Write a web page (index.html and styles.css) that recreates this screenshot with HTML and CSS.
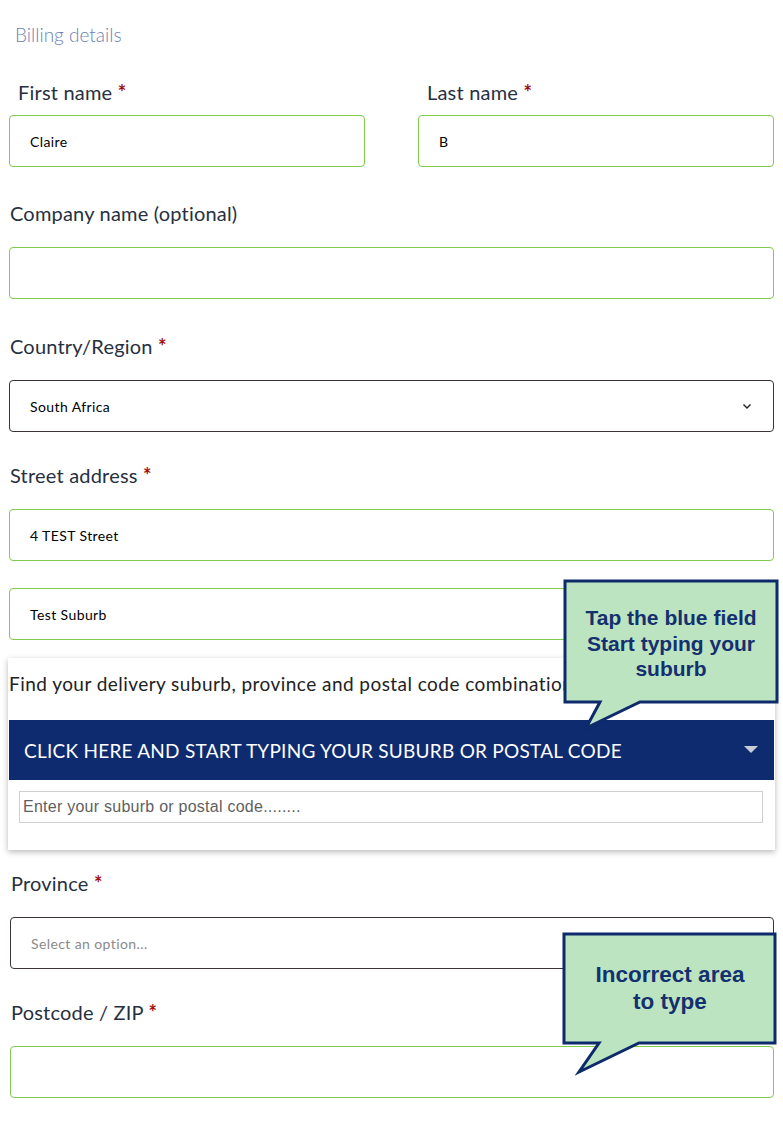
FILE: index.html
```html
<!DOCTYPE html>
<html lang="en">
<head>
<meta charset="utf-8">
<title>Billing details</title>
<link rel="stylesheet" href="styles.css">
</head>
<body>
<div class="page">
  <h3 class="title">Billing details</h3>

  <div class="row-two">
    <div class="field first">
      <label class="lbl lbl-first">First name <span class="req">*</span></label>
      <div class="input green">Claire</div>
    </div>
    <div class="field first">
      <label class="lbl lbl-first">Last name <span class="req">*</span></label>
      <div class="input green">B</div>
    </div>
  </div>

  <div class="field f-company">
    <label class="lbl">Company name (optional)</label>
    <div class="input green"></div>
  </div>

  <div class="field f-country">
    <label class="lbl">Country/Region <span class="req">*</span></label>
    <div class="input dark select">
      <span>South Africa</span>
      <svg class="chev" width="10" height="7" viewBox="0 0 10 7"><path d="M1.5 1.5 L5 5 L8.5 1.5" fill="none" stroke="#222" stroke-width="1.4"/></svg>
    </div>
  </div>

  <div class="field f-street">
    <label class="lbl">Street address <span class="req">*</span></label>
    <div class="input green">4 TEST Street</div>
    <div class="input green second">Test Suburb</div>
  </div>

  <div class="card">
    <p class="card-text">Find your delivery suburb, province and postal code combination</p>
    <div class="bluebar">
      <span>CLICK HERE AND START TYPING YOUR SUBURB OR POSTAL CODE</span>
      <svg class="tri" width="14" height="8" viewBox="0 0 14 8"><path d="M0 0 L14 0 L7 7 Z" fill="#c9cbd6"/></svg>
    </div>
    <div class="search">Enter your suburb or postal code........</div>
  </div>

  <div class="field f-province">
    <label class="lbl">Province <span class="req">*</span></label>
    <div class="input dark placeholder">Select an option...</div>
  </div>

  <div class="field f-postcode">
    <label class="lbl">Postcode / ZIP <span class="req">*</span></label>
    <div class="input green"></div>
  </div>
</div>

<div class="callout callout-1">
  <svg class="bubble" width="216" height="152" viewBox="0 0 216 152">
    <polygon points="2,2 214,2 214,123 77,123 23,149 37,123 2,123" fill="#bde4c1" stroke="#0d2a6b" stroke-width="3"/>
  </svg>
  <div class="callout-text t1">Tap the blue field<br>Start typing your<br>suburb</div>
</div>

<div class="callout callout-2">
  <svg class="bubble" width="216" height="144" viewBox="0 0 216 144">
    <polygon points="2,2 213,2 213,111 77,111 17,140 37,111 2,111" fill="#bde4c1" stroke="#0d2a6b" stroke-width="3"/>
  </svg>
  <div class="callout-text t2">Incorrect area<br>to type</div>
</div>
</body>
</html>
```

FILE: styles.css
```css
* { box-sizing: border-box; }
html, body { margin: 0; padding: 0; background: #fff; }
body { font-family: "Lato", "Noto Sans", sans-serif; color: #1f2937; }

.page {
  width: 783px;
  padding: 0 9px 0 9px;
}

.title {
  margin: 0;
  padding: 23px 0 0 6px;
  font-size: 19px;
  line-height: 24px;
  font-weight: 300;
  color: #6d7fb5;
}

.row-two {
  display: grid;
  grid-template-columns: 356px 356px;
  column-gap: 53px;
  margin-top: 33px;
}

.lbl {
  display: block;
  font-size: 20px;
  line-height: 24px;
  letter-spacing: 0.2px;
  color: #27303f;
  margin-bottom: 22px;
  padding-left: 1px;
}
.lbl-first { margin-bottom: 11px; padding-left: 9px; }
.req { color: #a10d0d; font-weight: 700; }

.input {
  height: 52px;
  border: 1px solid #80cc4c;
  border-radius: 4px;
  display: flex;
  align-items: center;
  padding-left: 20px;
  font-size: 14px;
  letter-spacing: 0.4px;
  color: #000;
}
.input.dark { border-color: #3c3434; }
.input.select { justify-content: space-between; padding-right: 21px; }
.input.placeholder { color: #8a8a8a; }
.input.second { margin-top: 27px; }

.f-company { margin-top: 34px; }
.f-country { margin-top: 35px; }
.f-street { margin-top: 31px; }

.card {
  margin: 18px -1px 0 -1px;
  width: 767px;
  height: 192px;
  background: #fff;
  box-shadow: 0 2px 6px rgba(0,0,0,0.28);
  padding: 14px 1px 0 1px;
}
.card-text {
  margin: 0;
  font-size: 19px;
  line-height: 24px;
  letter-spacing: 0.45px;
  color: #222;
  white-space: nowrap;
  overflow: hidden;
}
.bluebar {
  margin-top: 24px;
  height: 60px;
  background: #0e2b6f;
  display: flex;
  align-items: center;
  justify-content: space-between;
  padding: 0 16px 0 15px;
  color: #fff;
  font-size: 19px;
  letter-spacing: 0.25px;
}
.search {
  margin: 11px 11px 0 10px;
  height: 32px;
  border: 1px solid #cfcfcf;
  display: flex;
  align-items: center;
  padding-left: 3px;
  font-family: "Liberation Sans", Arial, sans-serif;
  font-size: 16px;
  letter-spacing: 0.25px;
  color: #5f5f5f;
}

.f-province { margin-top: 21px; }
.f-province .lbl, .f-postcode .lbl { padding-left: 2px; }
.f-province .input, .f-postcode .input { margin-left: 1px; }
.f-postcode { margin-top: 31px; }

.callout { position: absolute; }
.callout-1 { left: 563px; top: 579px; width: 216px; height: 152px; }
.callout-2 { left: 562px; top: 932px; width: 216px; height: 144px; }
.bubble { position: absolute; left: 0; top: 0; }
.callout-text {
  position: relative;
  text-align: center;
  font-family: "Liberation Sans", Arial, sans-serif;
  font-weight: 700;
  color: #14306e;
}
.t1 { width: 216px; padding-top: 26px; font-size: 21px; line-height: 25.5px; }
.t2 { width: 216px; padding-top: 29px; font-size: 22.5px; line-height: 27px; }
```
